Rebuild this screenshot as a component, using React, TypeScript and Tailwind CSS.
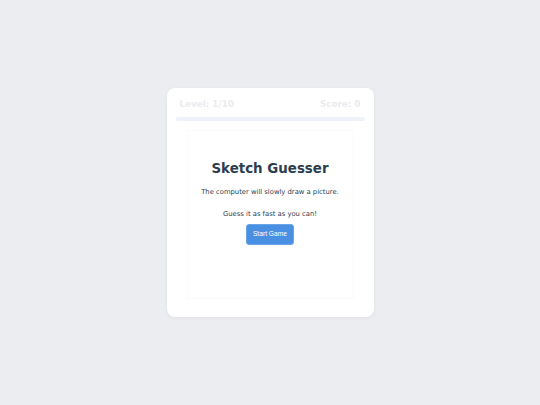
import React from 'react';

export default function App() {
  return (
    <div className="w-full h-[405px] bg-[#ebedf0] flex items-center justify-center font-['DejaVu_Sans',sans-serif]">
      <div className="w-[207px] h-[229px] bg-white rounded-[8px] shadow-[0_1px_4px_rgba(0,0,0,0.05)] flex flex-col pt-[9px] pb-[18px]">
        {/* Faded header */}
        <div className="h-[15px] px-[13px] flex items-center justify-between text-[8.8px] font-bold text-[#e9ecef]">
          <span>Level: 1/10</span>
          <span>Score: 0</span>
        </div>
        <div className="mx-[9px] mt-[5px] h-[4px] rounded-full bg-[#eef3fa]" />

        <div className="mx-[20px] mt-[9px] h-[169px] border border-[#f9fafb] flex flex-col items-center pt-[30px] text-[#2c3e50]">
          <h1 className="text-[13.4px] leading-[16px] font-bold">Sketch Guesser</h1>
          <p className="mt-[11px] text-[6.8px] leading-[9px] whitespace-nowrap">The computer will slowly draw a picture.</p>
          <p className="mt-[13px] text-[6.8px] leading-[9px]">Guess it as fast as you can!</p>
          <button className="mt-[5px] w-[48px] h-[21px] rounded-[3px] bg-[#4a90e2] border border-[#6aa5ea] text-white text-[6.7px] font-['Liberation_Sans',Arial,sans-serif]">
            Start Game
          </button>
        </div>
      </div>
    </div>
  );
}
